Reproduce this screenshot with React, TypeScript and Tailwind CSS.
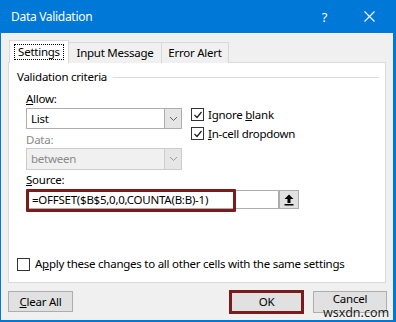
import React from 'react';

function Check() {
  return (
    <svg width="10" height="10" viewBox="0 0 10 10" className="block">
      <polyline points="1.5,5 4,7.5 8.5,2" fill="none" stroke="#1a1a1a" strokeWidth="1.2" />
    </svg>
  );
}

function CheckBox({ checked }: { checked?: boolean }) {
  return (
    <span className="w-[13px] h-[13px] border border-[#333] bg-white flex items-center justify-center shrink-0">
      {checked && <Check />}
    </span>
  );
}

function Chevron({ color }: { color: string }) {
  return (
    <svg width="9" height="6" viewBox="0 0 9 6">
      <polyline points="1,1 4.5,4.5 8,1" fill="none" stroke={color} strokeWidth="1" />
    </svg>
  );
}

function Select({ value, disabled }: { value: string; disabled?: boolean }) {
  return (
    <div
      className={
        disabled
          ? 'flex h-[22px] w-[156px] border border-[#cccccc] bg-[#f0f0f0]'
          : 'flex h-[21px] w-[156px] border border-[#adadad] bg-white'
      }
    >
      <span className={disabled ? 'flex-1 pl-[4px] leading-[20px] text-[#8a8a8a]' : 'flex-1 pl-[4px] leading-[19px] text-black'}>
        {value}
      </span>
      <span
        className={
          disabled
            ? 'w-[17px] flex items-center justify-center bg-[#e6e6e6] border-l border-[#cccccc]'
            : 'w-[17px] flex items-center justify-center bg-[#e5e5e5] border-l border-[#adadad]'
        }
      >
        <Chevron color={disabled ? '#9a9a9a' : '#606060'} />
      </span>
    </div>
  );
}

export default function App() {
  return (
    <div className="w-[396px] h-[322px] flex flex-col bg-[#f0f0f0] border-l border-r-[3px] border-b-2 border-[#0078d7] text-[11.5px] tracking-[-0.25px] text-black font-['Noto_Sans',sans-serif] leading-[14px]">
      {/* Title bar */}
      <div className="h-[33px] shrink-0 bg-[#0078d7] flex items-center pl-[10px] text-white text-[12px] tracking-[-0.3px]">
        <span className="flex-1">Data Validation</span>
        <span className="mr-[37px] text-[13px]">?</span>
        <svg width="11" height="11" viewBox="0 0 11 11" className="mr-[18px]">
          <path d="M0.5 0.5 L10.5 10.5 M10.5 0.5 L0.5 10.5" stroke="white" strokeWidth="1.1" />
        </svg>
      </div>

      <div className="relative flex-1 flex flex-col">
        {/* Tabs */}
        <div className="flex items-end mt-[7px] pl-[8px] h-[23px] relative z-10">
          <div className="h-[23px] w-[60px] bg-white border border-b-0 border-[#d9d9d9] flex items-start justify-center pt-[3px]">
            <span className="border border-dotted border-black px-[3px] leading-[14px]">Settings</span>
          </div>
          <div className="h-[21px] w-[93px] border border-l-0 border-b-0 border-[#d9d9d9] bg-[#f0f0f0] flex items-center justify-center pb-[1px]">
            Input Message
          </div>
          <div className="h-[21px] w-[67px] border border-l-0 border-b-0 border-[#d9d9d9] bg-[#f0f0f0] flex items-center justify-center pb-[1px]">
            Error Alert
          </div>
        </div>

        {/* Panel */}
        <div className="ml-[7px] w-[378px] h-[221px] -mt-px bg-white border border-[#d9d9d9] flex flex-col">
          <div className="flex items-center mt-[7px] h-[14px] pl-[8px] pr-[6px]">
            <span>Validation criteria</span>
            <span className="flex-1 h-px bg-[#dcdcdc] ml-[6px]" />
          </div>

          <div className="flex pl-[17px] mt-[8px]">
            <div className="flex flex-col w-[156px]">
              <span className="h-[14px]">
                <u>A</u>llow:
              </span>
              <div className="mt-[2px]">
                <Select value="List" />
              </div>
              <span className="h-[14px] mt-[4px] text-[#8a8a8a]">Data:</span>
              <div className="mt-[1px]">
                <Select value="between" disabled />
              </div>
              <span className="h-[14px] mt-[3px]">
                <u>S</u>ource:
              </span>
            </div>
            <div className="flex flex-col ml-[9px] mt-[16px] gap-[6px]">
              <label className="flex items-center gap-[4px] h-[13px]">
                <CheckBox checked />
                <span>
                  Ignore <u>b</u>lank
                </span>
              </label>
              <label className="flex items-center gap-[4px] h-[13px]">
                <CheckBox checked />
                <span>
                  <u>I</u>n-cell dropdown
                </span>
              </label>
            </div>
          </div>

          {/* Source input */}
          <div className="relative flex pl-[17px] mt-[3px] h-[19px]">
            <div className="w-[253px] h-[19px] border border-[#adadad] bg-white pl-[5px] leading-[17px] whitespace-nowrap">
              =OFFSET($B$5,0,0,COUNTA(B:B)-1)
            </div>
            <div className="w-[20px] h-[19px] border border-[#adadad] bg-[#e1e1e1] flex items-center justify-center">
              <svg width="10" height="12" viewBox="0 0 10 12">
                <path d="M5 0.5 L9.5 5 L6.5 5 L6.5 9 L3.5 9 L3.5 5 L0.5 5 Z" fill="#000" />
                <rect x="0.5" y="10" width="9" height="1.5" fill="#000" />
              </svg>
            </div>
            <div className="absolute left-[17px] top-[-1px] w-[210px] h-[23px] border-[3px] border-[#7b1c1c] rounded-[1px]" />
          </div>

          <label className="flex items-center gap-[5px] pl-[8px] mt-[48px] h-[14px]">
            <CheckBox />
            <span>
              A<u>p</u>ply these changes to all other cells with the same settings
            </span>
          </label>
        </div>

        {/* Buttons */}
        <div className="flex items-start mt-[7px] pl-[7px]">
          <div className="w-[65px] h-[21px] mt-px border border-[#adadad] bg-[#e1e1e1] flex items-center justify-center">
            <span>
              <u>C</u>lear All
            </span>
          </div>
          <div className="ml-[156px] w-[75px] h-[24px] border-[3px] border-[#7b1c1c] bg-[#e1e1e1] flex items-center justify-center">
            OK
          </div>
          <div className="ml-[9px] w-[74px] h-[22px] mt-px border border-[#adadad] bg-[#e1e1e1] flex items-start justify-center">
            Cancel
          </div>
        </div>

        {/* watermark */}
        <span className="absolute left-[322px] top-[273px] text-[12.5px] leading-[14px] tracking-normal text-[#1a1a1a] [text-shadow:0_0_2px_white]">
          wsxdn.com
        </span>
      </div>
    </div>
  );
}
